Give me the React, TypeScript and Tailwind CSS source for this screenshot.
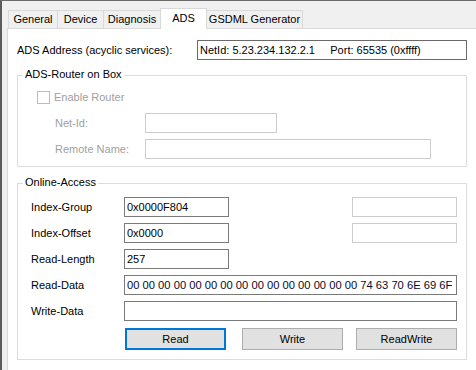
import React from 'react';

const tabs = [
  { label: 'General', w: 'w-[50px]' },
  { label: 'Device', w: 'w-[47px]' },
  { label: 'Diagnosis', w: 'w-[58px]' },
  { label: 'ADS', w: 'w-[47px]', active: true },
  { label: 'GSDML Generator', w: 'w-[97px]' },
];

const readData = '00 00 00 00 00 00 00 00 00 00 00 00 00 00 00 74 63 70 6E 69 6F';

function GroupBox({ title, className, children }: { title: string; className?: string; children: React.ReactNode }) {
  return (
    <div className={`relative ml-[9px] w-[450px] border border-[#dcdcdc] ${className || ''}`}>
      <div className="absolute left-[5px] top-[-8px] h-[13px] bg-white px-[2px] leading-[13px] text-black">{title}</div>
      {children}
    </div>
  );
}

function Field({ w, value, disabled }: { w: string; value?: string; disabled?: boolean }) {
  return (
    <div
      className={`h-[20px] ${w} overflow-hidden whitespace-nowrap border bg-white pl-[2px] leading-[18px] text-black ${
        disabled ? 'border-[#cccccc]' : 'border-[#7a7a7a]'
      }`}
    >
      {value}
    </div>
  );
}

export default function App() {
  return (
    <div className="flex h-[370px] w-[476px] overflow-hidden border-t border-[#6b6b6b] bg-[#f0f0f0] font-['Liberation_Sans',Arial,sans-serif] text-[11px] text-black">
      {/* splitter edge */}
      <div className="w-[2px] shrink-0 bg-[#5c5c5c]" />
      <div className="ml-[5px] flex flex-1 flex-col">
        {/* tab headers */}
        <div className="relative z-10 mt-[7px] ml-[1px] flex h-[20px] items-end">
          {tabs.map((t, i) => (
            <div
              key={t.label}
              className={`flex items-center justify-center border border-b-0 border-[#d9d9d9] ${t.w} ${i > 0 ? '-ml-px' : ''} ${
                t.active ? 'relative z-10 -mb-px h-[21px] bg-white pb-[2px]' : 'h-[18px] bg-[#f0f0f0]'
              }`}
            >
              {t.label}
            </div>
          ))}
        </div>

        {/* tab page */}
        <div className="flex-1 border-t border-l border-[#d9d9d9] bg-white">
          <div className="mt-[11px] flex items-center">
            <div className="w-[189px] pl-[9px]">ADS Address (acyclic services):</div>
            <div className="flex h-[20px] w-[270px] items-center border border-[#6a6a6a] pl-[2px] whitespace-pre">
              {'NetId: 5.23.234.132.2.1     Port: 65535 (0xffff)'}
            </div>
          </div>

          <GroupBox title="ADS-Router on Box" className="mt-[15px] pt-[15px] pb-[7px]">
            <div className="flex h-[13px] items-center pl-[19px]">
              <div className="h-[13px] w-[13px] border border-[#bcbcbc] bg-white" />
              <span className="ml-[4px] text-[#a0a0a0]">Enable Router</span>
            </div>
            <div className="mt-[9px] flex items-center pl-[37px]">
              <div className="w-[90px] text-[#a0a0a0]">Net-Id:</div>
              <Field w="w-[132px]" disabled />
            </div>
            <div className="mt-[6px] flex items-center pl-[37px]">
              <div className="w-[90px] text-[#a0a0a0]">Remote Name:</div>
              <Field w="w-[286px]" disabled />
            </div>
          </GroupBox>

          <GroupBox title="Online-Access" className="mt-[16px] pt-[13px] pb-[9px]">
            <div className="flex flex-col gap-[6px] pl-[13px]">
              <div className="flex items-center">
                <div className="w-[93px]">Index-Group</div>
                <Field w="w-[105px]" value="0x0000F804" />
                <div className="ml-[123px]">
                  <Field w="w-[105px]" disabled />
                </div>
              </div>
              <div className="flex items-center">
                <div className="w-[93px]">Index-Offset</div>
                <Field w="w-[105px]" value="0x0000" />
                <div className="ml-[123px]">
                  <Field w="w-[105px]" disabled />
                </div>
              </div>
              <div className="flex items-center">
                <div className="w-[93px]">Read-Length</div>
                <Field w="w-[105px]" value="257" />
              </div>
              <div className="flex items-center">
                <div className="w-[93px]">Read-Data</div>
                <div className="h-[20px] w-[333px] overflow-hidden whitespace-nowrap border border-[#7a7a7a] pl-[2px] text-[11.2px] leading-[18px] text-[#0a0a2a]">
                  {readData}
                </div>
              </div>
              <div className="flex items-center">
                <div className="w-[93px]">Write-Data</div>
                <Field w="w-[333px]" />
              </div>
            </div>
            <div className="mt-[7px] flex pl-[107px]">
              <button className="h-[22px] w-[101px] border-2 border-[#0078d7] bg-[#e1e1e1] leading-none">Read</button>
              <button className="ml-[16px] h-[22px] w-[101px] border border-[#adadad] bg-[#e1e1e1] leading-none">Write</button>
              <button className="ml-[13px] h-[22px] w-[101px] border border-[#adadad] bg-[#e1e1e1] leading-none">ReadWrite</button>
            </div>
          </GroupBox>
        </div>
      </div>
    </div>
  );
}
